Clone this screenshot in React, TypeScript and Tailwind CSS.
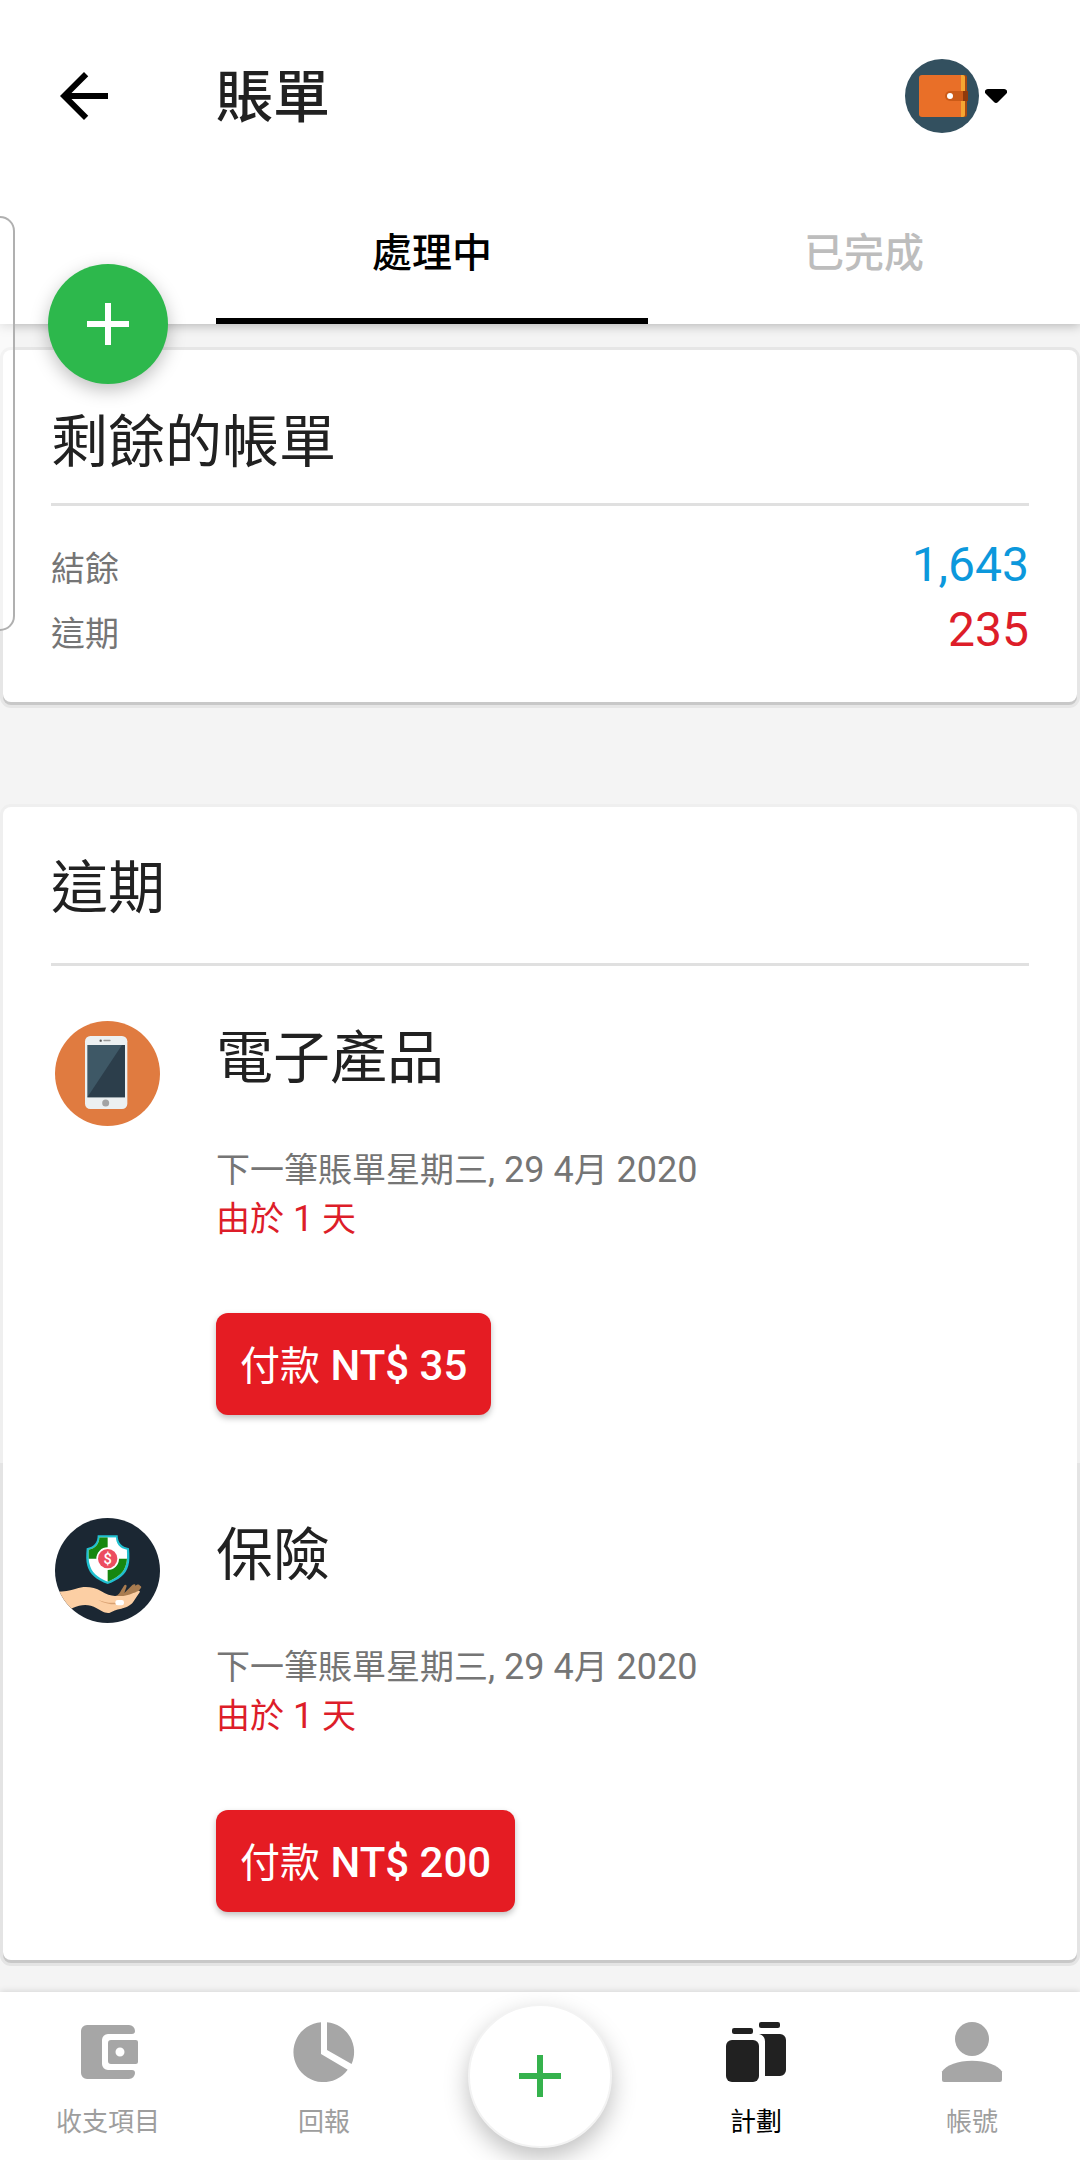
import { useState } from "react";
import type { ReactNode } from "react";

interface Bill {
  id: string;
  name: string;
  amount: number;
  next: { day: string; date: string; month: string; year: string };
  dueIn: number;
  icon: ReactNode;
}

const BackArrow = () => (
  <svg viewBox="0 0 24 24" className="size-[72px]" aria-hidden="true">
    <path d="M20 11H7.83l5.59-5.59L12 4l-8 8 8 8 1.41-1.41L7.83 13H20v-2z" />
  </svg>
);

const WalletAvatar = () => (
  <svg viewBox="0 0 74 74" className="size-[74px]" aria-hidden="true">
    <circle cx="37" cy="37" r="37" fill="#33505f" />
    <rect x="52" y="16" width="10" height="42" rx="2" fill="#a8480f" />
    <rect x="46" y="16" width="14" height="42" rx="2" fill="#f5a632" />
    <path d="M17 16h39v42H17a3 3 0 0 1-3-3V19a3 3 0 0 1 3-3z" fill="#e96f28" />
    <path d="M45 32h18v10H45a5 5 0 0 1 0-10z" fill="#cb5a17" />
    <path d="M58 32h5v10h-5z" fill="#8f3a0c" />
    <circle cx="45" cy="37" r="3" fill="#fff" />
  </svg>
);

const Caret = () => (
  <svg viewBox="0 0 22 14" className="h-[14px] w-[22px]" aria-hidden="true">
    <path d="M3 0h16c3 0 4 3 2 5l-8 8c-1.200 1.200-2.800 1.200-4 0L1 5C-1 3 0 0 3 0z" />
  </svg>
);

const PhoneIcon = () => (
  <svg viewBox="47 33 315 315" className="size-[105px]" aria-hidden="true">
    <circle cx="204.500" cy="190.500" r="157.500" fill="#e07b40" />
    <rect x="137" y="78" width="127" height="219" rx="16" fill="#ecf0f1" />
    <path d="M144 105h113v157H144z" fill="#3e5866" />
    <path d="M248 105h9v157H144z" fill="#2c3e4b" />
    <circle cx="184" cy="92" r="3.500" fill="#555" />
    <rect x="192" y="89.500" width="22" height="4" rx="2" fill="#999" />
    <circle cx="199" cy="279" r="10.500" fill="#a3a3a3" />
  </svg>
);

const InsuranceIcon = () => (
  <svg viewBox="47 56 315 315" className="size-[105px]" aria-hidden="true">
    <defs>
      <clipPath id="badge">
        <circle cx="204.500" cy="213.500" r="157.500" />
      </clipPath>
      <clipPath id="shield">
        <path d="M180 114h50c0 20 12 34 33 37-1 0 2 24-2 41-6 28-24 42-56 55-32-13-49-27-55-55-4-17-2-41-2-41 20-3 32-17 32-37z" />
      </clipPath>
    </defs>
    <g clipPath="url(#badge)">
      <path d="M47 56h315v315H47z" fill="#1b2733" />
      <path
        d="M175 108h60c0 22 12 35 34 39 2 22 2 38-2 52-7 26-28 42-62 55-34-13-54-29-61-55-4-14-4-30-2-52 22-4 33-17 33-39z"
        fill="#20c0d0"
      />
      <g clipPath="url(#shield)">
        <path d="M135 100h140v160H135z" fill="#fff" />
        <path d="M135 100h70v78h-70zM205 178h70v80h-70z" fill="#16870f" />
      </g>
      <circle cx="205" cy="178" r="34" fill="#fff" />
      <circle cx="205" cy="178" r="29" fill="#ec4d60" />
      <text
        x="205"
        y="194"
        textAnchor="middle"
        className="fill-white text-[44px] font-medium [font-family:Roboto,sans-serif]"
      >
        $
      </text>
      <path d="M228 290c9-2 14-9 18-18l9-14c4-4 9 0 6 6l-6 17 24-24c5-4 11-2 9 3 7-6 11-5 14-1 5 1 5 5 1 9l-21 25-30 14z" fill="#a97c50" />
      <path
        d="M40 277c30 1 50-3 70-9 25-8 52-6 76 8 16 9 30 15 44 14l22 0c20-4 30-9 47-16 5 1 2 6-2 11l-16 24c-7 10-24 17-35 19-16 3-25 7-36 13-15 2-26-8-38-14-24-14-46-12-72-1L60 350z"
        fill="#fccfa4"
      />
      <path d="M176 301c16 10 34 14 54 14v-5c-20 2-38-2-54-9z" fill="#d9a273" />
      <rect x="228" y="302" width="26" height="16" rx="7" fill="#fff" />
    </g>
  </svg>
);

const Plus = ({ className }: { className: string }) => (
  <svg viewBox="0 0 42 42" className={className} aria-hidden="true">
    <path d="M18 0h6v18h18v6H24v18h-6V24H0v-6h18z" />
  </svg>
);

const navIcons = {
  wallet: (
    <>
      <path d="M5 3h14a2 2 0 0 1 2 2 1 1 0 0 1-1 1h-8a2 2 0 0 0-2 2v8a2 2 0 0 0 2 2h8a1 1 0 0 1 1 1 2 2 0 0 1-2 2H5a2 2 0 0 1-2-2V5a2 2 0 0 1 2-2z" />
      <path
        fillRule="evenodd"
        d="M13 8h8.300a.7.7 0 0 1 .7.7v6.600a.7.7 0 0 1-.7.700H13a1 1 0 0 1-1-1V9a1 1 0 0 1 1-1zm3 2.500a1.500 1.500 0 1 0 0 3 1.500 1.500 0 1 0 0-3z"
      />
    </>
  ),
  pie: (
    <path d="M11 2.050A10 10 0 1 0 19.900 17.900L11 12.700zM13 2.050v9.250l8.200 4.700A10 10 0 0 0 13 2.050z" />
  ),
  jars: (
    <>
      <rect x="4" y="4" width="7" height="2" rx=".7" />
      <rect x="13" y="2" width="7" height="2" rx=".7" />
      <rect x="2" y="8" width="11" height="14" rx="2" />
      <path d="M13 6h7a2 2 0 0 1 2 2v10a2 2 0 0 1-2 2h-5V8.500C15 7.200 14.200 6.300 13 6z" />
    </>
  ),
  person: (
    <>
      <circle cx="12" cy="7.670" r="5.670" />
      <path d="M2 18.500C3.500 16.300 7.300 14.900 12 14.900s8.500 1.400 10 3.600v2.800a.7.7 0 0 1-.7.700H2.700a.7.7 0 0 1-.7-.7z" />
    </>
  ),
};

const bills: Bill[] = [
  {
    id: "electronics",
    name: "電子產品",
    amount: 35,
    next: { day: "星期三", date: "29", month: "4", year: "2020" },
    dueIn: 1,
    icon: <PhoneIcon />,
  },
  {
    id: "insurance",
    name: "保險",
    amount: 200,
    next: { day: "星期三", date: "29", month: "4", year: "2020" },
    dueIn: 1,
    icon: <InsuranceIcon />,
  },
];

function NavItem({ label, icon, active = false }: { label: string; icon: ReactNode; active?: boolean }) {
  return (
    <a
      href="#"
      aria-current={active ? "page" : undefined}
      className="flex flex-1 flex-col items-center pt-6"
    >
      <svg
        viewBox="0 0 24 24"
        className={active ? "size-[72px] fill-[#212121]" : "size-[72px] fill-[#a6a6a6]"}
        aria-hidden="true"
      >
        {icon}
      </svg>
      <span className={`mt-[14px] text-[26px] leading-[40px] ${active ? "text-black" : "text-[#9e9e9e]"}`}>
        {label}
      </span>
    </a>
  );
}

// Latin runs are a touch larger than the Chinese text next to them
function BillItem({ bill, last }: { bill: Bill; last: boolean }) {
  return (
    <li
      className={`flex bg-white pt-[51px] pb-12 pl-[52px] ${
        last ? "rounded-b-lg shadow-[0_3px_0_0_#c8c8c8,0_3px_0_3px_#e4e4e4]" : ""
      }`}
    >
      <div className="w-[161px] shrink-0 pt-1">{bill.icon}</div>
      <div>
        <h3 className="text-[57px] leading-[84px] text-[#212121]">{bill.name}</h3>
        <p className="mt-[45px] text-[34px] leading-[49px] text-[#757575]">
          下一筆賬單{bill.next.day}
          <span className="text-[36px]">, {bill.next.date} {bill.next.month}</span>月
          <span className="text-[36px]"> {bill.next.year}</span>
        </p>
        <p className="text-[34px] leading-[49px] text-[#dd1d29]">
          由於<span className="text-[36px]"> {bill.dueIn} </span>天
        </p>
        <button
          type="button"
          className="mt-[69px] h-[102px] rounded-xl bg-[#e51c23] px-6 pt-[2px] text-[40px] text-white shadow-[0_3px_6px_rgba(0,0,0,0.25)]"
        >
          付款<span className="text-[42px] font-medium"> NT$ {bill.amount}</span>
        </button>
      </div>
    </li>
  );
}

export default function App() {
  const [tab, setTab] = useState<"active" | "done">("active");

  const tabClass = (on: boolean) =>
    `flex-1 border-b-[6px] pt-[2px] pb-1 text-[40px] font-medium ${
      on ? "border-black text-black" : "border-transparent text-[#bdbdbd]"
    }`;

  return (
    <div
      lang="zh-Hant"
      className="relative flex min-h-screen flex-col bg-[#f4f4f4] [font-family:Roboto,'Noto_Sans_CJK_TC',sans-serif]"
    >
      <header className="relative bg-white shadow-[0_2px_10px_rgba(0,0,0,0.25)]">
        <div className="flex h-[192px] items-center pr-[73px] pl-12">
          <button type="button" aria-label="返回">
            <BackArrow />
          </button>
          <h1 className="ml-24 pt-1 text-[57px] leading-[84px] font-medium text-[#212121]">賬單</h1>
          <button type="button" aria-label="錢包" className="ml-auto flex items-center gap-[6px]">
            <WalletAvatar />
            <Caret />
          </button>
        </div>
        <div role="tablist" className="flex h-[132px] pl-[20%]">
          <button
            type="button"
            role="tab"
            aria-selected={tab === "active"}
            onClick={() => setTab("active")}
            className={tabClass(tab === "active")}
          >
            處理中
          </button>
          <button
            type="button"
            role="tab"
            aria-selected={tab === "done"}
            onClick={() => setTab("done")}
            className={tabClass(tab === "done")}
          >
            已完成
          </button>
        </div>
        <button
          type="button"
          aria-label="新增賬單"
          className="absolute -bottom-[60px] left-12 z-20 flex size-[120px] items-center justify-center rounded-full bg-[#2db84c] shadow-[0_6px_18px_rgba(0,0,0,0.25)]"
        >
          <Plus className="size-[42px] fill-white" />
        </button>
      </header>

      {/* Edge panel handle */}
      <div className="absolute top-[216px] left-0 z-10 h-[415px] w-[15px] rounded-r-2xl border-2 border-l-0 border-[#b0b0b0] bg-white/50" />

      <main className="mx-[3px] flex flex-1 flex-col pt-[26px] pb-8">
        <section className="rounded-lg bg-white px-12 pt-[51px] pb-10 shadow-[0_3px_0_0_#c8c8c8,0_3px_0_3px_#e6e6e6,0_0_0_3px_#e6e6e6]">
          <h2 className="border-b-[3px] border-[#e0e0e0] pb-[18px] text-[57px] leading-[84px] text-[#212121]">
            剩餘的帳單
          </h2>
          <dl className="pt-[26px] leading-[65px]">
            <div className="flex h-[65px] items-baseline justify-between">
              <dt className="text-[34px] text-[#757575]">結餘</dt>
              <dd className="text-[48px] text-[#0c98dc]">1,643</dd>
            </div>
            <div className="flex h-[65px] items-baseline justify-between">
              <dt className="text-[34px] text-[#757575]">這期</dt>
              <dd className="text-[48px] text-[#dd1d29]">235</dd>
            </div>
          </dl>
        </section>

        <section className="mt-[105px] rounded-lg bg-white shadow-[0_0_0_3px_#efefef]">
          <h2 className="mx-12 border-b-[3px] border-[#e0e0e0] pt-10 pb-8 text-[57px] leading-[84px] text-[#212121]">
            這期
          </h2>
          <ul>
            {bills.map((bill, i) => (
              <BillItem key={bill.id} bill={bill} last={i === bills.length - 1} />
            ))}
          </ul>
        </section>
      </main>

      <nav className="flex h-[168px] bg-white shadow-[0_-1px_6px_rgba(0,0,0,0.12)]">
        <NavItem label="收支項目" icon={navIcons.wallet} />
        <NavItem label="回報" icon={navIcons.pie} />
        <div className="flex flex-1 items-center justify-center">
          <button
            type="button"
            aria-label="新增"
            className="flex size-[144px] items-center justify-center rounded-full border-2 border-[#f3f3f3] bg-white shadow-[0_10px_24px_rgba(0,0,0,0.25)]"
          >
            <Plus className="size-[42px] fill-[#35b24d]" />
          </button>
        </div>
        <NavItem label="計劃" icon={navIcons.jars} active />
        <NavItem label="帳號" icon={navIcons.person} />
      </nav>
    </div>
  );
}
